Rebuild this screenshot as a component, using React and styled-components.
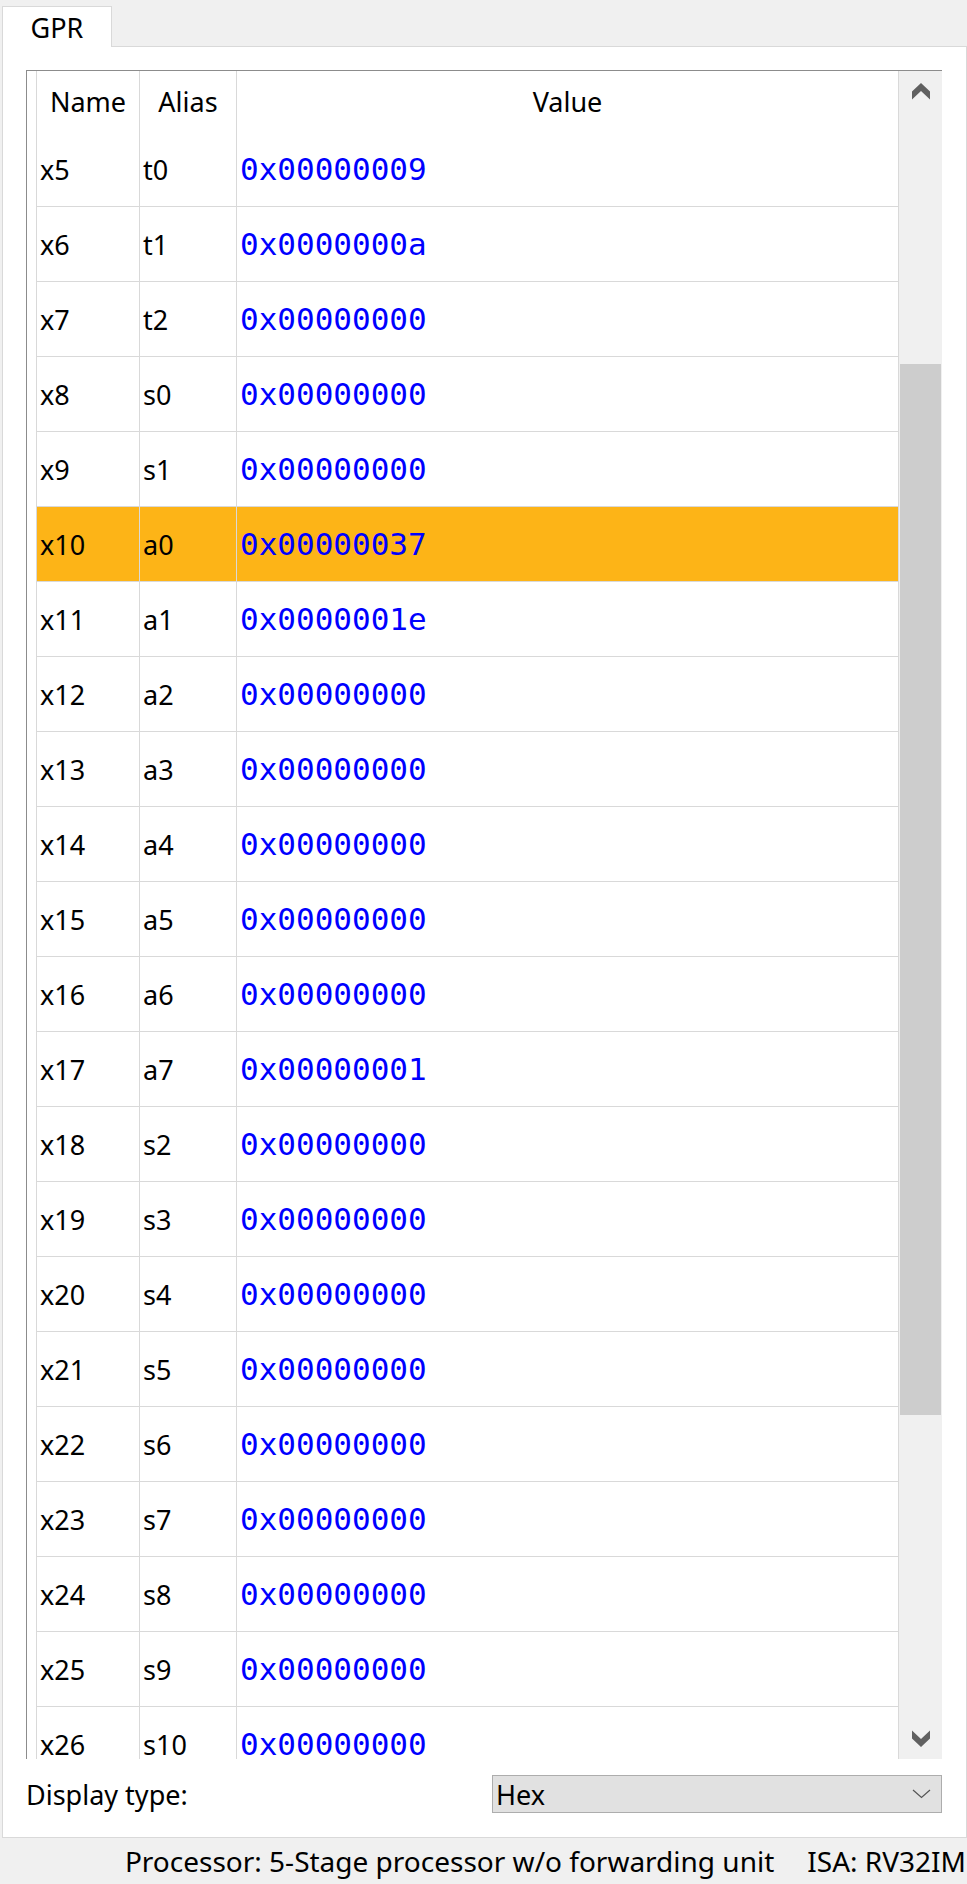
import React from "react";
import styled, { createGlobalStyle } from "styled-components";

const GlobalStyle = createGlobalStyle`
  html, body { margin: 0; padding: 0; }
  body {
    background: #f0f0f0;
    font-family: "Noto Sans", "Open Sans", sans-serif;
    color: #000;
  }
`;

const Window = styled.div`
  width: 967px;
  height: 1884px;
  display: flex;
  flex-direction: column;
  overflow: hidden;
`;

const TabBar = styled.div`
  display: flex;
  align-items: flex-end;
  height: 46px;
  padding-left: 2px;
  box-sizing: border-box;
`;

const Tab = styled.div`
  position: relative;
  z-index: 1;
  width: 110px;
  height: 41px;
  margin-bottom: -1px;
  box-sizing: border-box;
  background: #fff;
  border: 1px solid #d9d9d9;
  border-bottom: none;
  display: flex;
  align-items: center;
  justify-content: center;
  font-size: 27px;
`;

const Pane = styled.div`
  margin-left: 2px;
  width: 965px;
  height: 1792px;
  box-sizing: border-box;
  background: #fff;
  border: 1px solid #d9d9d9;
  padding: 23px 24px 24px 23px;
  display: flex;
  flex-direction: column;
`;

const TableFrame = styled.div`
  width: 916px;
  height: 1689px;
  box-sizing: border-box;
  border-top: 1px solid #8c8c8c;
  border-left: 1px solid #8c8c8c;
  display: grid;
  grid-template-columns: 872px 43px;
`;

const TableView = styled.div`
  height: 1688px;
  overflow: hidden;
  background: #fff;
`;

const Row = styled.div`
  display: grid;
  grid-template-columns: 10px 103px 97px 662px;
  height: ${(p) => (p.$header ? "61px" : "75px")};
`;

const Cell = styled.div`
  box-sizing: border-box;
  border-right: 1px solid #d9d9d9;
  border-bottom: ${(p) => (p.$header || p.$gutter ? "none" : "1px solid #d9d9d9")};
  background: ${(p) => (p.$hl && !p.$gutter ? "#fdb417" : "#fff")};
  display: flex;
  align-items: center;
  justify-content: ${(p) => (p.$header ? "center" : "flex-start")};
  padding-left: ${(p) => (p.$header ? "0" : "3px")};
  font-family: ${(p) =>
    p.$mono ? '"DejaVu Sans Mono", monospace' : '"Noto Sans", "Open Sans", sans-serif'};
  font-size: ${(p) => (p.$mono ? "31px" : "27px")};
  color: ${(p) => (p.$mono ? "#0000ff" : "#000")};
  white-space: nowrap;
  overflow: hidden;
`;

const ScrollBar = styled.div`
  height: 1688px;
  background: #f0f0f0;
  display: flex;
  flex-direction: column;
`;

const ArrowButton = styled.div`
  height: ${(p) => p.$h}px;
  flex: none;
  display: flex;
  align-items: center;
  justify-content: center;
`;

const Track = styled.div`
  flex: 1;
  display: flex;
  flex-direction: column;
`;

const Thumb = styled.div`
  margin: ${(p) => p.$offset}px 1px 0 1px;
  height: ${(p) => p.$size}px;
  background: #cdcdcd;
`;

const DisplayRow = styled.div`
  margin-top: 16px;
  display: grid;
  grid-template-columns: 450px 450px;
  column-gap: 16px;
  align-items: center;
  height: 38px;
`;

const Label = styled.div`
  font-size: 27px;
`;

const Combo = styled.div`
  height: 38px;
  box-sizing: border-box;
  background: #e1e1e1;
  border: 1px solid #adadad;
  display: flex;
  align-items: center;
  justify-content: space-between;
  padding-left: 3px;
  padding-right: 10px;
  font-size: 27px;
`;

const StatusBar = styled.div`
  flex: 1;
  display: flex;
  align-items: center;
  justify-content: flex-end;
  gap: 33px;
  padding-right: 1px;
  font-size: 28px;
  white-space: nowrap;
  overflow: hidden;
`;

const UpArrow = () => (
  <svg width="18" height="17" viewBox="0 0 18 17">
    <path d="M0 8.5 L9 0 L18 8.5 L18 16.5 L9 8 L0 16.5 Z" fill="#606060" />
  </svg>
);

const DownArrow = () => (
  <svg width="18" height="17" viewBox="0 0 18 17">
    <path d="M0 0.5 L9 9 L18 0.5 L18 8.5 L9 17 L0 8.5 Z" fill="#606060" />
  </svg>
);

const ComboChevron = () => (
  <svg width="19" height="10" viewBox="0 0 19 10">
    <path d="M1 1 L9.5 8.5 L18 1" fill="none" stroke="#555" strokeWidth="1.2" />
  </svg>
);

const regs = [
  ["x5", "t0", "0x00000009"],
  ["x6", "t1", "0x0000000a"],
  ["x7", "t2", "0x00000000"],
  ["x8", "s0", "0x00000000"],
  ["x9", "s1", "0x00000000"],
  ["x10", "a0", "0x00000037", true],
  ["x11", "a1", "0x0000001e"],
  ["x12", "a2", "0x00000000"],
  ["x13", "a3", "0x00000000"],
  ["x14", "a4", "0x00000000"],
  ["x15", "a5", "0x00000000"],
  ["x16", "a6", "0x00000000"],
  ["x17", "a7", "0x00000001"],
  ["x18", "s2", "0x00000000"],
  ["x19", "s3", "0x00000000"],
  ["x20", "s4", "0x00000000"],
  ["x21", "s5", "0x00000000"],
  ["x22", "s6", "0x00000000"],
  ["x23", "s7", "0x00000000"],
  ["x24", "s8", "0x00000000"],
  ["x25", "s9", "0x00000000"],
  ["x26", "s10", "0x00000000"],
];

export default function App() {
  return (
    <>
      <GlobalStyle />
      <Window>
        <TabBar>
          <Tab>GPR</Tab>
        </TabBar>
        <Pane>
          <TableFrame>
            <TableView>
              <Row $header>
                <Cell $header $gutter />
                <Cell $header>Name</Cell>
                <Cell $header>Alias</Cell>
                <Cell $header>Value</Cell>
              </Row>
              {regs.map(([name, alias, value, hl]) => (
                <Row key={name}>
                  <Cell $gutter />
                  <Cell $hl={hl}>{name}</Cell>
                  <Cell $hl={hl}>{alias}</Cell>
                  <Cell $hl={hl} $mono>
                    {value}
                  </Cell>
                </Row>
              ))}
            </TableView>
            <ScrollBar>
              <ArrowButton $h={40}>
                <UpArrow />
              </ArrowButton>
              <Track>
                <Thumb $offset={253} $size={1051} />
              </Track>
              <ArrowButton $h={42}>
                <DownArrow />
              </ArrowButton>
            </ScrollBar>
          </TableFrame>
          <DisplayRow>
            <Label>Display type:</Label>
            <Combo>
              <span>Hex</span>
              <ComboChevron />
            </Combo>
          </DisplayRow>
        </Pane>
        <StatusBar>
          <span>Processor: 5-Stage processor w/o forwarding unit</span>
          <span>ISA: RV32IM</span>
        </StatusBar>
      </Window>
    </>
  );
}
